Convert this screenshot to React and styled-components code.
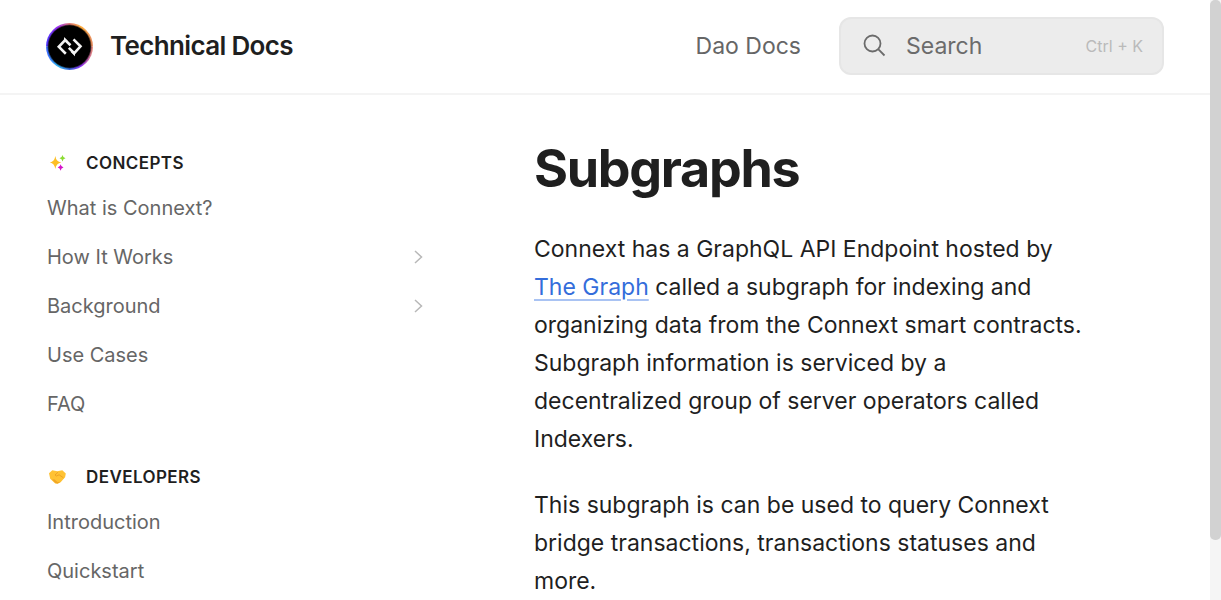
import React from 'react';
import styled, { createGlobalStyle } from 'styled-components';

const GlobalStyle = createGlobalStyle`
  *, *::before, *::after { box-sizing: border-box; }
  body {
    margin: 0;
    background: #fff;
    color: #1f1f1f;
    font-family: Inter, "Liberation Sans", sans-serif;
  }
  h1, h2, p, ul { margin: 0; padding: 0; }
`;

const Shell = styled.div`
  display: flex;
  height: 100vh;
  overflow: hidden;
`;

const Page = styled.div`
  flex: 1;
  min-width: 0;
`;

const ScrollTrack = styled.div`
  flex: none;
  width: 11px;
  background: #f5f5f5;
`;

const ScrollThumb = styled.div`
  height: 90%;
  border-radius: 5px;
  background: #d2d2d2;
`;

const Header = styled.header`
  display: flex;
  align-items: center;
  padding: 17px 46px 18px;
  border-bottom: 2px solid #f4f4f4;
`;

const Brand = styled.a`
  display: flex;
  align-items: center;
  gap: 17px;
  margin-right: auto;
  color: #1f1f1f;
  font-size: 26px;
  font-weight: 600;
  line-height: 36px;
  letter-spacing: -0.025em;
  text-decoration: none;
`;

const Logo = styled.svg`
  width: 47px;
  height: 47px;
`;

const HeaderLink = styled.a`
  margin-right: 38px;
  color: #666;
  font-size: 23px;
  line-height: 36px;
  text-decoration: none;
`;

const SearchBox = styled.button`
  display: flex;
  align-items: center;
  width: 325px;
  height: 58px;
  padding: 0 19px 0 22px;
  border: 2px solid #e6e6e6;
  border-radius: 12px;
  background: #ececec;
  color: #6b6b6b;
  font: 400 23px/36px Inter, "Liberation Sans", sans-serif;
  text-align: left;
`;

const SearchLabel = styled.span`
  flex: 1;
  margin-left: 19px;
`;

const Shortcut = styled.span`
  color: #bababa;
  font-size: 16px;
`;

const Columns = styled.div`
  display: grid;
  grid-template-columns: 377px 1fr;
  column-gap: 110px;
  padding: 40px 118px 0 47px;
`;

const Sidebar = styled.nav`
  display: flex;
  flex-direction: column;
  gap: 20px;
  padding-top: 3px;
`;

const GroupTitle = styled.h2`
  display: flex;
  align-items: center;
  gap: 16px;
  height: 49px;
  font-size: 17px;
  font-weight: 600;
  letter-spacing: 0.025em;
`;

const GroupIcon = styled.svg`
  width: 23px;
  height: 23px;
`;

const Links = styled.ul`
  list-style: none;
`;

const NavLink = styled.a`
  display: flex;
  align-items: center;
  justify-content: space-between;
  height: 49px;
  padding-bottom: 8px;
  color: #666;
  font-size: 20px;
  text-decoration: none;
`;

const Article = styled.main`
  min-width: 0;
`;

const Title = styled.h1`
  margin-bottom: 27px;
  font-size: 52px;
  font-weight: 700;
  line-height: 68px;
  letter-spacing: -0.025em;
`;

const Paragraph = styled.p`
  margin-bottom: 28px;
  font-size: 23px;
  line-height: 38px;
`;

const TextLink = styled.a`
  color: #346ddb;
  text-decoration: underline;
  text-decoration-color: #a9c3f3;
  text-decoration-thickness: 2px;
  text-underline-offset: 4px;
`;

function BrandLogo() {
  return (
    <Logo viewBox="0 0 47 47" aria-hidden="true">
      <defs>
        <linearGradient id="ringTop" x1="0" y1="0" x2="1" y2="0">
          <stop offset="0" stopColor="#4a35ff" />
          <stop offset="0.25" stopColor="#9b2ff0" />
          <stop offset="0.5" stopColor="#e07a78" />
          <stop offset="0.75" stopColor="#ffae3d" />
          <stop offset="1" stopColor="#e58a60" />
        </linearGradient>
        <linearGradient id="ringBottom" x1="0" y1="0" x2="1" y2="0">
          <stop offset="0" stopColor="#3b62ff" />
          <stop offset="0.25" stopColor="#36b8f5" />
          <stop offset="0.5" stopColor="#3768d8" />
          <stop offset="0.75" stopColor="#8d2ff0" />
          <stop offset="1" stopColor="#e58a70" />
        </linearGradient>
      </defs>
      <path d="M0 23.500a23.500 23.500 0 0 1 47 0z" fill="url(#ringTop)" />
      <path d="M0 23.500a23.500 23.500 0 0 0 47 0z" fill="url(#ringBottom)" />
      <circle cx="23.500" cy="23.500" r="22" fill="#000" fillOpacity="0.5" />
      <circle cx="23.500" cy="23.500" r="21.200" fill="#000" />
      <g fill="none" stroke="#f4f4f4" strokeWidth="2.600">
        <path d="M19.800 30.700 12.800 23.800l6.300-6.800 5.400 5.300" />
        <path d="M27.500 16.400l7 7-6.200 6.800-5.500-5.300" />
      </g>
      <path d="M18 14v4.500h4.500z M29 33.200v-4.500h-4.500z" fill="#f4f4f4" />
    </Logo>
  );
}

function SearchIcon() {
  return (
    <svg width="24" height="24" viewBox="0 0 24 24" fill="none" stroke="#6b6b6b" strokeWidth="1.800" aria-hidden="true">
      <circle cx="9.500" cy="9.500" r="8" />
      <path d="M15.200 15.200 21.500 21.500" />
    </svg>
  );
}

function Chevron() {
  return (
    <svg width="12" height="16" viewBox="0 0 12 16" fill="none" stroke="#b8b8b8" strokeWidth="1.500" aria-hidden="true">
      <path d="M3 2l6.500 6L3 14" />
    </svg>
  );
}

function Sparkles() {
  return (
    <GroupIcon viewBox="0 0 23 23" aria-hidden="true">
      <path d="M8.300 5q.8 5.600 6 6.500-5.200.9-6 6.500-.8-5.600-5.400-6.500 4.600-.9 5.400-6.500z" fill="#fdbf25" />
      <path d="M15.500 4q.5 2.700 3 3.200-2.500.5-3 3.200-.5-2.700-3-3.200 2.500-.5 3-3.200z" fill="#8bdc32" />
      <path d="M13.600 13.300q.5 2.700 2.900 3.200-2.400.5-2.900 3.200-.5-2.700-2.900-3.200 2.400-.5 2.900-3.200z" fill="#d414c9" />
    </GroupIcon>
  );
}

function Handshake() {
  return (
    <GroupIcon viewBox="0 0 23 23" aria-hidden="true">
      <path d="M2 8.300 5.300 5.200 10.300 6.300l5-1.100 3.500 3.200-.7 3.800-4.500 5.100-3.100 1.500-2.300-.4-5-4.600z" fill="#ffc233" />
      <path d="M11 7.200 8 10l1.500 1 2.600-1.200 4.300 3" fill="none" stroke="#e99a20" strokeWidth="0.800" />
      <path d="m5 14.500 3.500 3.500 2.200.5 3-1.800-3.200.3-3.200-2.700z" fill="#f0a527" />
    </GroupIcon>
  );
}

const groups = [
  {
    title: 'CONCEPTS',
    icon: Sparkles,
    links: [
      { label: 'What is Connext?' },
      { label: 'How It Works', expandable: true },
      { label: 'Background', expandable: true },
      { label: 'Use Cases' },
      { label: 'FAQ' },
    ],
  },
  {
    title: 'DEVELOPERS',
    icon: Handshake,
    links: [{ label: 'Introduction' }, { label: 'Quickstart' }],
  },
];

export default function App() {
  return (
    <>
      <GlobalStyle />
      <Shell>
        <Page>
          <Header>
            <Brand href="#">
              <BrandLogo />
              Technical Docs
            </Brand>
            <HeaderLink href="#">Dao Docs</HeaderLink>
            <SearchBox type="button">
              <SearchIcon />
              <SearchLabel>Search</SearchLabel>
              <Shortcut>Ctrl + K</Shortcut>
            </SearchBox>
          </Header>
          <Columns>
            <Sidebar>
              {groups.map(({ title, icon: Icon, links }) => (
                <section key={title}>
                  <GroupTitle>
                    <Icon />
                    {title}
                  </GroupTitle>
                  <Links>
                    {links.map(({ label, expandable }) => (
                      <li key={label}>
                        <NavLink href="#">
                          {label}
                          {expandable && <Chevron />}
                        </NavLink>
                      </li>
                    ))}
                  </Links>
                </section>
              ))}
            </Sidebar>
            <Article>
              <Title>Subgraphs</Title>
              <Paragraph>
                Connext has a GraphQL API Endpoint hosted by <TextLink href="#">The Graph</TextLink> called a
                subgraph for indexing and organizing data from the Connext smart contracts. Subgraph
                information is serviced by a decentralized group of server operators called Indexers.
              </Paragraph>
              <Paragraph>
                This subgraph is can be used to query Connext bridge transactions, transactions statuses and
                more.
              </Paragraph>
            </Article>
          </Columns>
        </Page>
        <ScrollTrack>
          <ScrollThumb />
        </ScrollTrack>
      </Shell>
    </>
  );
}
